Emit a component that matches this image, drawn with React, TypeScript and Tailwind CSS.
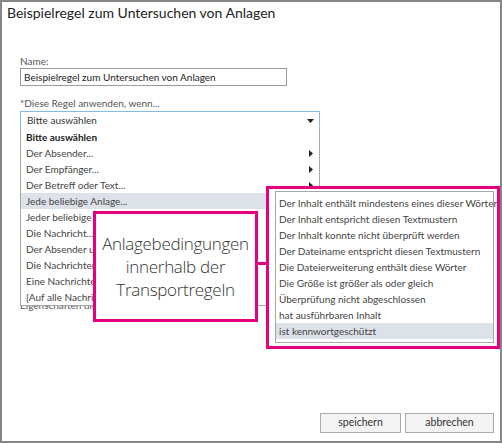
import React from "react";

const mainItems = [
  { label: "Bitte auswählen", bold: true },
  { label: "Der Absender...", arrow: true },
  { label: "Der Empfänger...", arrow: true },
  { label: "Der Betreff oder Text...", arrow: true },
  { label: "Jede beliebige Anlage...", arrow: true, active: true },
  { label: "Jeder beliebige Empfänger...", arrow: true },
  { label: "Die Nachricht...", arrow: true },
  { label: "Der Absender und der Empfänger...", arrow: true },
  { label: "Die Nachrichteneigenschaften...", arrow: true },
  { label: "Eine Nachrichtenkopfzeile...", arrow: true },
  { label: "[Auf alle Nachrichten anwenden]" },
];

const subItems = [
  "Der Inhalt enthält mindestens eines dieser Wörter",
  "Der Inhalt entspricht diesen Textmustern",
  "Der Inhalt konnte nicht überprüft werden",
  "Der Dateiname entspricht diesen Textmustern",
  "Die Dateierweiterung enthält diese Wörter",
  "Die Größe ist größer als oder gleich",
  "Überprüfung nicht abgeschlossen",
  "hat ausführbaren Inhalt",
  "ist kennwortgeschützt",
];

export default function App() {
  return (
    <div className="relative flex h-[443px] w-[502px] flex-col overflow-hidden border-2 border-[#858585] bg-white font-['Lato',sans-serif] text-[#333]">
      {/* Title */}
      <h1 className="whitespace-nowrap pl-[5px] pt-[1px] text-[14px] leading-[20px] text-[#222]">
        Beispielregel zum Untersuchen von Anlagen
      </h1>

      <div className="flex flex-col pl-[18px] pt-[31px] text-[10px]">
        <label className="leading-[14px] text-[#555]">Name:</label>
        <div className="flex h-[18px] w-[267px] items-center whitespace-nowrap border border-[#9a9a9a] px-[3px] text-[#222]">
          Beispielregel zum Untersuchen von Anlagen
        </div>

        <label className="mt-[10px] leading-[15px] text-[#555]">*Diese Regel anwenden, wenn...</label>
        <div className="relative w-[300px]">
          <div className="flex h-[19px] items-center justify-between border border-[#86b8e8] pl-[6px] pr-[5px] text-[#333]">
            <span>Bitte auswählen</span>
            <svg width="7" height="4" viewBox="0 0 7 4">
              <path d="M0 0h7L3.5 4z" fill="#222" />
            </svg>
          </div>

          {/* Dropdown list */}
          <ul className="absolute left-0 top-[18px] z-10 w-[300px] border border-t-0 border-[#a6a6a6] bg-white">
            {mainItems.map((item, idx) => (
              <li
                key={idx}
                className={`flex h-[16px] items-center justify-between whitespace-nowrap pl-[5px] pr-[6px] leading-[16px] ${
                  item.active ? "bg-[#dde1e8]" : ""
                } ${item.bold ? "font-bold text-[#222]" : "text-[#444]"}`}
              >
                <span>{item.label}</span>
                {item.arrow && (
                  <svg width="4" height="7" viewBox="0 0 4 7">
                    <path d="M0 0l4 3.5L0 7z" fill="#222" />
                  </svg>
                )}
              </li>
            ))}
          </ul>
        </div>

        <p className="mt-[168px] whitespace-nowrap leading-[14px] text-[#555]">Eigenschaften dieser Regel</p>
      </div>

      {/* Buttons */}
      <div className="mt-auto flex justify-end gap-[4px] pb-[8px] pr-[6px] text-[10.5px]">
        <button className="h-[20px] w-[81px] border border-[#ababab] bg-[#f3f3f3] text-[#333]">speichern</button>
        <button className="h-[20px] w-[89px] border border-[#ababab] bg-[#f3f3f3] text-[#333]">abbrechen</button>
      </div>

      {/* Callout: left label */}
      <div className="absolute left-[91px] top-[209px] z-20 flex h-[111px] w-[165px] flex-col items-center justify-center border-[3px] border-[#e6007e] bg-white text-center font-['Open_Sans',sans-serif] text-[17px] font-light leading-[23px] tracking-[-0.3px] text-[#333]">
        <span>Anlagebedingungen</span>
        <span>innerhalb der</span>
        <span>Transportregeln</span>
      </div>

      {/* Connector */}
      <div className="absolute left-[253px] top-[260px] z-20 h-[3px] w-[12px] bg-[#e6007e]" />

      {/* Callout: submenu */}
      <div className="absolute left-[264px] top-[184px] z-20 h-[163px] w-[234px] border-[3px] border-[#e6007e] bg-white pl-[6px] pr-[3px] pt-[2px]">
        <ul className="border border-[#a6a6a6] bg-white py-[3px] text-[10px]">
          {subItems.map((label, idx) => (
            <li
              key={idx}
              className={`h-[16px] whitespace-nowrap pl-[3px] leading-[16px] text-[#444] ${
                idx === subItems.length - 1 ? "bg-[#dde1e8]" : ""
              }`}
            >
              {label}
            </li>
          ))}
        </ul>
      </div>
    </div>
  );
}
